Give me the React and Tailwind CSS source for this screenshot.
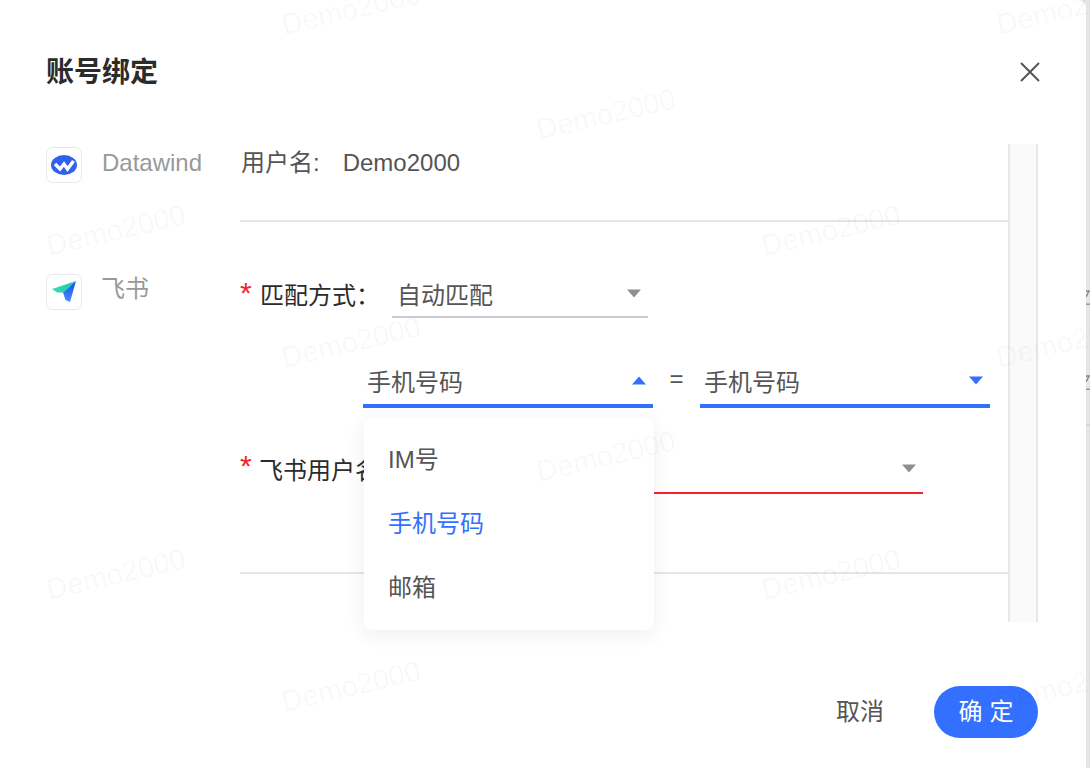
const CJK = "font-['Liberation_Sans','Noto_Sans_CJK_SC',sans-serif]";

const marks = [
  [280, -9],
  [535, 96],
  [45, 212],
  [760, 212],
  [280, 324],
  [995, 324],
  [535, 438],
  [45, 556],
  [760, 556],
  [280, 668],
  [995, 668],
  [995, -9],
];

const Watermarks = () => (
  <div className="absolute inset-0 overflow-hidden pointer-events-none">
    {marks.map(([x, y]) => (
      <span
        key={`${x}-${y}`}
        className="absolute text-[29px] leading-[36px] text-[#20204a]/[0.035] -rotate-[13deg] origin-center"
        style={{ left: x, top: y }}
      >
        Demo2000
      </span>
    ))}
  </div>
);

const Arrow = ({ up, blue, className = "" }) => (
  <svg width="14" height="9" viewBox="0 0 14 9" className={`shrink-0 ${className}`}>
    <path
      d={up ? "M7 0.5 L14 8.5 L0 8.5 Z" : "M0 0.5 L14 0.5 L7 8.5 Z"}
      fill={blue ? "#3370ff" : "#8f8f8f"}
    />
  </svg>
);

const DatawindLogo = () => (
  <svg width="26" height="20" viewBox="0 0 26 20">
    <ellipse cx="13" cy="10" rx="13" ry="10" fill="#2f62ea" />
    <path
      d="M4 9 L9 14 L13 9 L16.5 14 L22.5 6"
      fill="none"
      stroke="#fff"
      strokeWidth="3.4"
    />
  </svg>
);

const FeishuLogo = () => (
  <svg width="24" height="24" viewBox="0 0 24 24">
    <defs>
      <linearGradient id="wing" x1="0" y1="0" x2="1" y2="0">
        <stop offset="0" stopColor="#3ddbb4" />
        <stop offset="1" stopColor="#14c8a8" />
      </linearGradient>
      <linearGradient id="tail" x1="0.6" y1="0" x2="0.5" y2="1">
        <stop offset="0" stopColor="#0b4fe8" />
        <stop offset="1" stopColor="#4c8dfb" />
      </linearGradient>
    </defs>
    <path d="M0 9 L24 1 L11 12.5 L5 12.5 Z" fill="url(#wing)" />
    <path d="M24 1 L18 22 L13.5 20 L11 12.5 Z" fill="url(#tail)" />
  </svg>
);

const Select = ({ value, up, blue, className, line, textClass }) => (
  <div className={`flex items-center justify-between ${line} ${className}`}>
    <span className={`text-[24px] leading-[32px] text-[#555] ${textClass}`}>{value}</span>
    <Arrow up={up} blue={blue} className="mb-[2px]" />
  </div>
);

const LogoBox = ({ children }) => (
  <div className="w-9 h-9 rounded-md border border-[#e6e8ee] bg-white flex items-center justify-center">
    {children}
  </div>
);

const Star = () => (
  <span className="w-[21px] pt-[5px] text-[30px] leading-[32px] text-[#f5222d]">*</span>
);

// what shows of the page behind the modal
const BehindStrip = () => (
  <div className="flex flex-col w-1 pt-[290px]">
    <svg width="4" height="15" viewBox="0 0 4 15">
      <path d="M0 1 H4 M3 1 L0 7" stroke="#8a8a8a" strokeWidth="1.5" fill="none" />
      <path d="M0 14.5 H4" stroke="#999" strokeWidth="2" />
    </svg>
    <div className="h-[70px]" />
    <svg width="4" height="15" viewBox="0 0 4 15">
      <path d="M0 1 H4 M3 1 L0 7" stroke="#8a8a8a" strokeWidth="1.5" fill="none" />
      <path d="M0 14.5 H4" stroke="#999" strokeWidth="2" />
    </svg>
    <div className="h-[2px] mt-[34px] bg-[#d4d4da]" />
  </div>
);

export default function App() {
  return (
    <div className={`relative flex h-screen w-[1090px] overflow-hidden bg-[#e4e4ea] ${CJK}`}>
      <div className="flex flex-col w-[1086px] bg-white rounded-tr-lg">
        <header className="flex items-center justify-between h-[144px] pl-[46px] pr-[45px]">
          <h1 className="text-[28px] leading-[40px] font-semibold text-[#2b2b2b] mt-[1px]">账号绑定</h1>
          <svg width="22" height="22" viewBox="0 0 22 22" className="-mt-[1px]">
            <path d="M2 2 L20 20 M20 2 L2 20" stroke="#555" strokeWidth="2" />
          </svg>
        </header>

        <div className="flex ml-[46px] w-[992px] h-[478px]">
          <div className="w-[962px]">
            {/* Datawind row */}
            <div className="flex h-[78px]">
              <div className="flex w-[194px] pt-[3px]">
                <LogoBox><DatawindLogo /></LogoBox>
                <span className="ml-5 text-[24px] leading-[32px] text-[#999]">Datawind</span>
              </div>
              <div className="flex-1 border-b-2 border-[#e4e4ea] pl-[1px] text-[24px] leading-[38px] text-[#555]">
                <span>用户名:</span>
                <span className="ml-[23px]">Demo2000</span>
              </div>
            </div>

            {/* Feishu row */}
            <div className="flex h-[352px]">
              <div className="flex w-[194px] pt-[52px]">
                <LogoBox><FeishuLogo /></LogoBox>
                <span className="ml-[19px] -mt-[1px] text-[24px] leading-[32px] text-[#999]">飞书</span>
              </div>
              <div className="relative flex-1 border-b-2 border-[#e4e4ea] pt-[50px]">
                <div className="flex items-start">
                  <Star />
                  <span className="w-[131px] -ml-[1px] mr-[1px] pt-[1px] text-[24px] leading-[46px] text-[#2b2b2b]">匹配方式：</span>
                  <Select
                    value="自动匹配"
                    up={false}
                    line="border-b-2 border-[#c8ccd4]"
                    textClass="pt-[4px]"
                    className="w-[256px] h-[46px] pl-[5px] pr-[7px]"
                  />
                </div>

                <div className="flex items-center mt-[39px] ml-[123px]">
                  <Select
                    value="手机号码"
                    up
                    blue
                    line="border-b-4 border-[#3370ff]"
                    textClass="pt-[4px]"
                    className="w-[290px] h-[50px] pl-[4px] pr-[7px]"
                  />
                  <span className="w-[47px] text-center text-[24px] leading-[32px] text-[#555] -mt-[8px]">=</span>
                  <Select
                    value="手机号码"
                    up={false}
                    blue
                    line="border-b-4 border-[#3370ff]"
                    textClass="pt-[4px]"
                    className="w-[290px] h-[50px] pl-[4px] pr-[7px]"
                  />
                </div>

                <div className="flex items-start mt-[37px]">
                  <Star />
                  <span className="w-[131px] -ml-[2px] mr-[2px] pt-[3px] text-[24px] leading-[46px] text-[#2b2b2b] whitespace-nowrap">飞书用户名：</span>
                  <div className="flex items-center justify-end w-[531px] h-[49px] border-b-2 border-[#f5222d] pr-[7px]">
                    <Arrow />
                  </div>
                </div>

                {/* open dropdown */}
                <ul className="absolute left-[124px] top-[196px] w-[290px] h-[212px] py-[10px] bg-white rounded-lg shadow-[0_4px_20px_rgba(40,50,90,0.08)] text-[24px] leading-[64px] text-[#555]">
                  <li className="pl-[24px]">IM号</li>
                  <li className="pl-[24px] text-[#3370ff]">手机号码</li>
                  <li className="pl-[24px]">邮箱</li>
                </ul>
              </div>
            </div>
          </div>
          {/* scrollbar track */}
          <div className="w-[30px] bg-[#fafafa] border-x-2 border-[#e8e8ec]" />
        </div>

        <footer className="flex items-center justify-end mt-[64px] pr-[48px]">
          <button className="text-[24px] leading-[32px] text-[#555] mr-[50px]">取消</button>
          <button className="w-[104px] h-[52px] rounded-full bg-[#3370ff] text-white text-[24px] tracking-[7px] pl-[7px]">确定</button>
        </footer>
      </div>
      <BehindStrip />
      <Watermarks />
    </div>
  );
}
